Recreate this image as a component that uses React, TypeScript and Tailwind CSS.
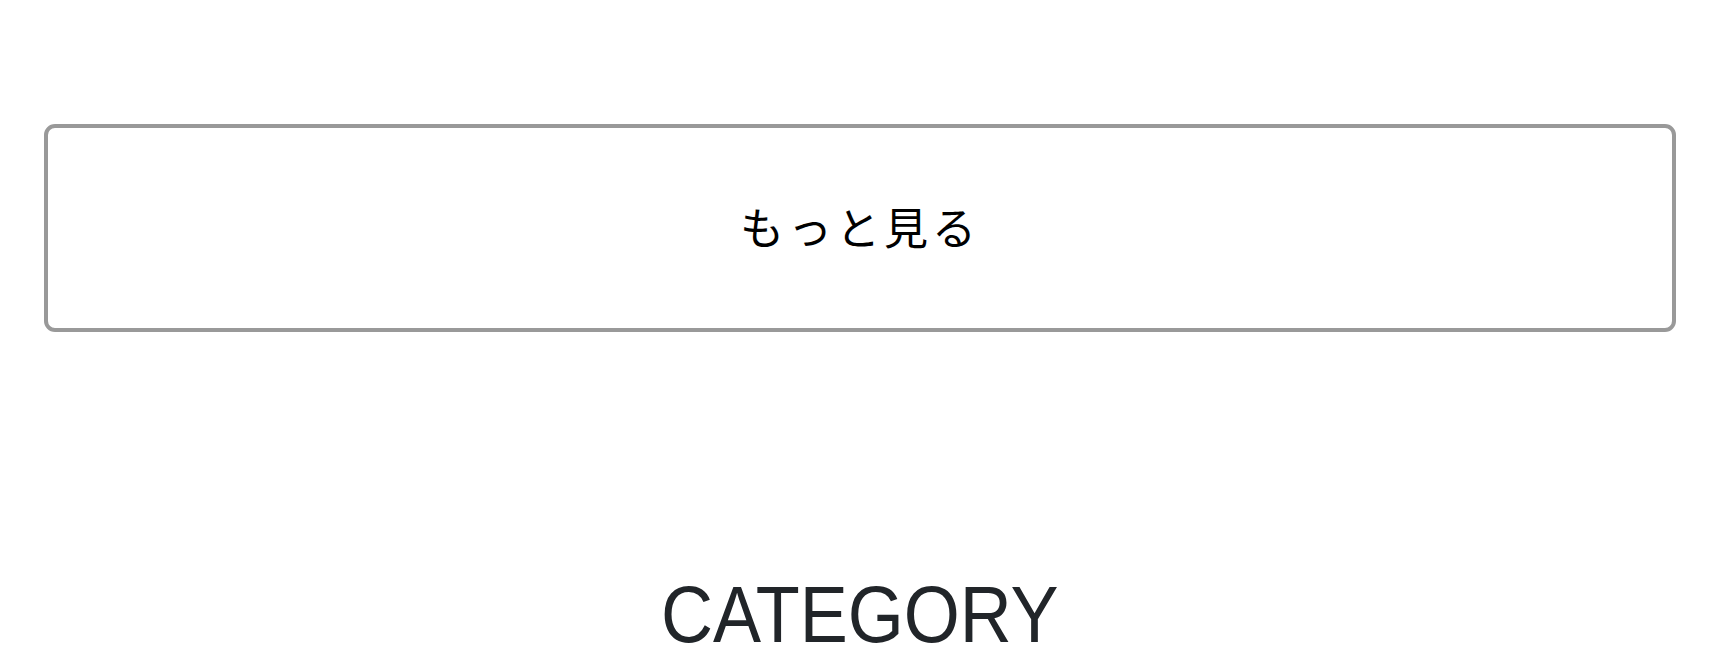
import React from "react";

export default function App() {
  return (
    <div className="w-full h-[672px] overflow-hidden bg-white">
      <div className="pt-[124px] px-[44px]">
        <button
          type="button"
          className="w-full h-[208px] border-4 border-[#999999] rounded-[11px] bg-white flex items-center justify-center text-[44px] tracking-[4px] text-black font-normal pb-[4px]"
          style={{ fontFamily: '"Noto Sans CJK JP", "Noto Sans", sans-serif' }}
        >
          もっと見る
        </button>
      </div>
      <div className="mt-[243px] flex justify-center">
        <h2
          className="inline-block text-[80px] leading-none text-[#212529] font-normal scale-x-90"
          style={{ fontFamily: '"Liberation Sans", Arial, sans-serif' }}
        >
          CATEGORY
        </h2>
      </div>
    </div>
  );
}
